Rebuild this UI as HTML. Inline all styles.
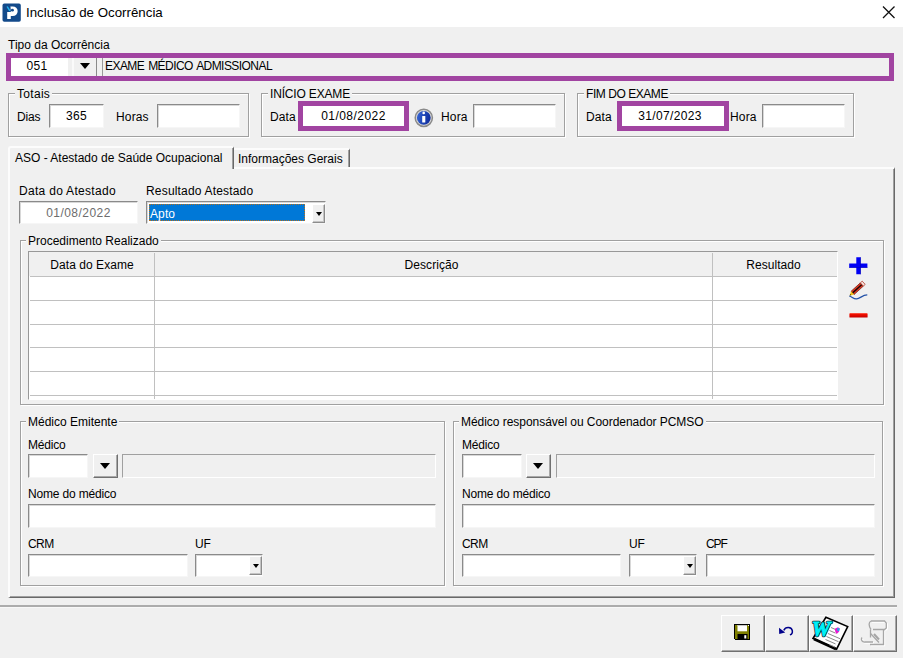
<!DOCTYPE html>
<html lang="pt-BR">
<head>
<meta charset="utf-8">
<title>Inclusão de Ocorrência</title>
<style>
*{box-sizing:border-box;margin:0;padding:0}
html,body{width:903px;height:658px;overflow:hidden;background:#f0f0f0}
body{position:relative;font-family:"Liberation Sans",sans-serif;font-size:12px;letter-spacing:0;color:#000}
.abs{position:absolute}
.t{position:absolute;white-space:nowrap;line-height:14px;height:14px}
.titlebar{position:absolute;left:0;top:0;width:903px;height:27px;background:#fff}
.title{position:absolute;left:26px;top:4px;font-size:13.3px;letter-spacing:0;line-height:18px;white-space:nowrap;color:#000}
.purple{position:absolute;border:5px solid #a144a1}
.inp{position:absolute;background:#fff;border:1px solid #e3e3e3;border-top-color:#8a8a8a;border-left-color:#8a8a8a;border-right-color:#f6f6f6;border-bottom-color:#f6f6f6;box-shadow:inset 1px 1px 0 #d8d8d8}
.inp.gray{background:#f0f0f0;box-shadow:none;border-top-color:#a0a0a0;border-left-color:#a0a0a0;border-right-color:#fff;border-bottom-color:#fff}
.val{position:absolute;left:0;right:0;top:50%;margin-top:-7px;height:14px;line-height:14px;text-align:center;white-space:nowrap}
.btn{position:absolute;background:#f0f0f0;border:1px solid #fff;border-right-color:#707070;border-bottom-color:#707070;box-shadow:inset -1px -1px 0 #a8a8a8}
.sbtn{border-right-color:#8c8c8c !important;border-bottom-color:#8c8c8c !important;box-shadow:inset -1px -1px 0 #c4c4c4 !important}
.fs{position:absolute;border:1px solid #a0a0a0;box-shadow:1px 1px 0 #fff, inset 1px 1px 0 #fff}
.lg{position:absolute;top:-7px;left:6px;background:#f0f0f0;padding:0 2px;line-height:14px;height:14px;white-space:nowrap}
.arrow{position:absolute;width:0;height:0;border-left:5.5px solid transparent;border-right:5.5px solid transparent;border-top:6px solid #000}
.sarrow{position:absolute;width:0;height:0;border-left:3.5px solid transparent;border-right:3.5px solid transparent;border-top:4px solid #000}
.grid{position:absolute;background:#fff}
.gl{position:absolute;background:#c0c0c0}
</style>
</head>
<body>
<!-- title bar -->
<div class="titlebar">
  <svg class="abs" style="left:2px;top:3px" width="20" height="20" viewBox="0 0 20 20">
    <rect x="0.500" y="0.600" width="18.300" height="18.100" rx="1.800" fill="#134a8a"/>
    <path d="M8.300 3.400h2.500a4.850 4.850 0 0 1 0 9.700H8.800v3H5.200V8.900h3.100z" fill="#fff"/>
    <path d="M8.300 3.400L5.200 3.400 5.200 8.900 8.800 8.900z" fill="#134a8a"/>
    <ellipse cx="10.400" cy="7.200" rx="1.500" ry="1.400" fill="#134a8a"/>
    <path d="M4.500 3.700l1.300-.5 2.700 4.200-1.200.8z" fill="#22b4f2"/>
  </svg>
  <div class="title">Inclusão de Ocorrência</div>
  <svg class="abs" style="left:881px;top:4.300px" width="16" height="16" viewBox="0 0 16 16"><path d="M2 2.5L13.5 14M13.5 2.5L2 14" stroke="#111" stroke-width="1.3" fill="none"/></svg>
</div>

<!-- Tipo da Ocorrência -->
<div class="t" style="letter-spacing:0px;left:8px;top:38px">Tipo da Ocorrência</div>
<div class="purple" style="left:6px;top:53px;width:888px;height:28px"></div>
<div class="abs" style="left:11px;top:58px;width:57px;height:18px;background:#fff"><div class="val" style="letter-spacing:0.4px;left:0;width:52px;right:auto;margin-top:-8px">051</div></div>
<div class="abs" style="left:72px;top:58px;width:2px;height:18px;background:#fafafa"></div>
<div class="abs" style="left:96px;top:58px;width:1px;height:18px;background:#8a8a8a"></div>
<div class="abs" style="left:80px;top:63px;width:0;height:0;border-left:5.5px solid transparent;border-right:5.5px solid transparent;border-top:6px solid #000"></div>
<div class="abs" style="left:102px;top:58px;width:787px;height:18px;background:#f0f0f0;border-left:1px solid #9a9a9a"><div class="t" style="letter-spacing:-0.56px;word-spacing:1.2px;left:2px;top:1px;">EXAME MÉDICO ADMISSIONAL</div></div>

<!-- Totais -->
<div class="fs" style="left:8px;top:93px;width:241px;height:44px"><span class="lg" style="letter-spacing:0.3px;">Totais</span></div>
<div class="t" style="letter-spacing:-0.19px;left:17px;top:110px">Dias</div>
<div class="inp" style="left:49px;top:104px;width:55px;height:24px"><div class="val" style="letter-spacing:0.4px;">365</div></div>
<div class="t" style="letter-spacing:0.15px;left:116px;top:110px">Horas</div>
<div class="inp" style="left:157px;top:104px;width:83px;height:24px"></div>

<!-- INICIO EXAME -->
<div class="fs" style="left:261px;top:93px;width:304px;height:44px"><span class="lg" style="letter-spacing:-0.17px;">INÍCIO EXAME</span></div>
<div class="t" style="letter-spacing:0.1px;left:270px;top:110px">Data</div>
<div class="purple" style="left:298px;top:101px;width:111px;height:30px"></div>
<div class="abs" style="left:303px;top:106px;width:101px;height:20px;background:#fff"><div class="val" style="letter-spacing:0.45px;">01/08/2022</div></div>
<svg class="abs" style="left:413px;top:107px" width="22" height="22" viewBox="0 0 22 22">
  <defs><linearGradient id="ig" x1="0" y1="0" x2="1" y2="0.3"><stop offset="0" stop-color="#3a6ad8"/><stop offset="0.55" stop-color="#2048b8"/><stop offset="1" stop-color="#1230a0"/></linearGradient></defs>
  <circle cx="10.800" cy="10.800" r="8.600" fill="#d8d8d8" stroke="#8a8a8a" stroke-width="1.500"/>
  <circle cx="10.800" cy="10.800" r="6.900" fill="url(#ig)"/>
  <circle cx="10.700" cy="5.900" r="1.300" fill="#fff"/>
  <rect x="9.200" y="8.900" width="3.100" height="6.600" rx=".5" fill="#fff"/>
</svg>
<div class="t" style="letter-spacing:0.15px;left:441px;top:110px">Hora</div>
<div class="inp" style="left:473px;top:104px;width:83px;height:24px"></div>

<!-- FIM DO EXAME -->
<div class="fs" style="left:577px;top:93px;width:277px;height:44px"><span class="lg" style="letter-spacing:-0.45px;">FIM DO EXAME</span></div>
<div class="t" style="letter-spacing:0.1px;left:586px;top:110px">Data</div>
<div class="purple" style="left:617px;top:101px;width:112px;height:30px"></div>
<div class="abs" style="left:622px;top:106px;width:102px;height:20px;background:#fff"><div class="val" style="letter-spacing:0.35px;left:-6px">31/07/2023</div></div>
<div class="t" style="letter-spacing:0.15px;left:730px;top:110px">Hora</div>
<div class="inp" style="left:762px;top:104px;width:83px;height:24px"></div>

<!-- Tabs -->
<div class="abs" style="left:8px;top:167px;width:887px;height:431px;border-left:2px solid #fcfcfc;border-top:2px solid #fcfcfc;border-right:1px solid #696969;border-bottom:1px solid #696969;box-shadow:inset -1px -1px 0 #a0a0a0"></div>
<div class="abs" style="left:8px;top:146px;width:226px;height:23px;background:#f0f0f0;border-left:2px solid #fcfcfc;border-top:2px solid #fcfcfc;border-right:1px solid #696969;box-shadow:inset -1px 0 0 #a0a0a0;border-radius:3px 2px 0 0"></div>
<div class="t" style="letter-spacing:0px;left:15px;top:151px">ASO - Atestado de Saúde Ocupacional</div>
<div class="abs" style="left:234px;top:148px;width:116px;height:19px;border-top:2px solid #fcfcfc;border-right:1px solid #696969;box-shadow:inset -1px 0 0 #a0a0a0;border-radius:0 2px 0 0"></div>
<div class="t" style="letter-spacing:0px;left:238px;top:152px">Informações Gerais</div>

<!-- inside tab -->
<div class="t" style="letter-spacing:0.3px;left:19px;top:184px">Data do Atestado</div>
<div class="inp" style="left:19px;top:201px;width:119px;height:23px"><div class="val" style="letter-spacing:0.45px;color:#6d6d6d">01/08/2022</div></div>
<div class="t" style="letter-spacing:0.18px;left:146px;top:184px">Resultado Atestado</div>
<div class="inp" style="left:146px;top:201px;width:180px;height:23px">
  <div class="abs" style="left:2px;top:2px;width:156px;height:17px;background:#0078d7;outline:1px dotted #b8701c;outline-offset:-1px"><div class="t" style="letter-spacing:0.1px;left:1px;top:3px;color:#fff">Apto</div></div>
  <div class="btn sbtn" style="left:165px;top:2px;width:13px;height:19px"><div class="sarrow" style="left:2.500px;top:7px"></div></div>
</div>

<!-- Procedimento Realizado -->
<div class="fs" style="left:20px;top:240px;width:864px;height:165px"><span class="lg" style="left:5px;letter-spacing:0px;">Procedimento Realizado</span></div>
<div class="grid" style="left:28px;top:251px;width:810px;height:149px;overflow:hidden;border-top:1px solid #989898;border-left:1px solid #989898;border-right:1px solid #fff;border-bottom:1px solid #fff">
  <div class="abs" style="left:0;top:0;width:809px;height:24px;background:#f0f0f0"></div>
  <div class="gl" style="left:1px;top:24px;width:808px;height:1px"></div>
  <div class="gl" style="left:1px;top:48px;width:808px;height:1px"></div>
  <div class="gl" style="left:1px;top:72px;width:808px;height:1px"></div>
  <div class="gl" style="left:1px;top:95px;width:808px;height:1px"></div>
  <div class="gl" style="left:1px;top:119px;width:808px;height:1px"></div>
  <div class="gl" style="left:1px;top:143px;width:808px;height:1px"></div>
  <div class="gl" style="left:125px;top:1px;width:1px;height:148px"></div>
  <div class="gl" style="left:683px;top:1px;width:1px;height:148px"></div>
  <div class="t" style="letter-spacing:0.05px;left:1px;width:124px;text-align:center;top:6px">Data do Exame</div>
  <div class="t" style="letter-spacing:0.05px;left:124px;width:557px;text-align:center;top:6px">Descrição</div>
  <div class="t" style="letter-spacing:0.05px;left:682px;width:125px;text-align:center;top:6px">Resultado</div>
</div>
<!-- plus / pencil / minus -->
<svg class="abs" style="left:848px;top:256px" width="21" height="20" viewBox="0 0 21 20"><path d="M8.300 1.200h4.400v6.200h6.700v4.400h-6.700v6.500H8.300v-6.500H1.200V7.400h7.100z" fill="#0000f4"/><path d="M12.200 1.200h.5v17.100h-.5zM1.200 11.300h18.200v.5H1.200z" fill="#0000b0"/></svg>
<svg class="abs" style="left:848px;top:280px" width="21" height="21" viewBox="0 0 21 21">
  <path d="M1.300 16.100c2.600 .2 4 3.100 7.300 2.800 3.600-.4 6-4 10.700-3.900" stroke="#2452a8" stroke-width="1.250" fill="none"/>
  <path d="M3.120 11.280L12.360 2.850 15.330 6.100 6.090 14.530z" fill="#e43a22" stroke="#6a1208" stroke-width=".7"/>
  <path d="M4.600 12.900L13.850 4.480" stroke="#1c0606" stroke-width="1.500"/>
  <path d="M12.360 2.850L14.210 1.170 17.170 4.420 15.330 6.100z" fill="#f8e4e0" stroke="#b03828" stroke-width=".8"/>
  <path d="M3.120 11.280L1.650 15.600 6.090 14.530z" fill="#f2c410"/>
  <path d="M1.650 15.600l.6-1.700 1.200 1.300z" fill="#403000"/>
</svg>
<svg class="abs" style="left:849px;top:313px" width="19" height="5" viewBox="0 0 19 5"><defs><linearGradient id="mg" x1="0" y1="0" x2="0" y2="1"><stop offset="0" stop-color="#ff1400"/><stop offset="1" stop-color="#c40000"/></linearGradient></defs><rect x=".4" y=".3" width="18.200" height="4.200" rx=".6" fill="url(#mg)"/></svg>

<!-- Médico Emitente -->
<div class="fs" style="left:20px;top:421px;width:425px;height:165px"><span class="lg" style="left:5px;letter-spacing:0px;">Médico Emitente</span></div>
<div class="t" style="letter-spacing:-0.2px;left:28px;top:438px">Médico</div>
<div class="inp" style="left:28px;top:454px;width:60px;height:24px"></div>
<div class="btn" style="left:93px;top:454px;width:25px;height:24px"><div class="arrow" style="left:6px;top:8px"></div></div>
<div class="inp gray" style="left:122px;top:454px;width:314px;height:24px"></div>
<div class="t" style="letter-spacing:-0.17px;left:28px;top:487px">Nome do médico</div>
<div class="inp" style="left:28px;top:504px;width:408px;height:24px"></div>
<div class="t" style="letter-spacing:-0.6px;left:28px;top:537px">CRM</div>
<div class="inp" style="left:28px;top:554px;width:160px;height:23px"></div>
<div class="t" style="letter-spacing:-0.2px;left:195px;top:537px">UF</div>
<div class="inp" style="left:195px;top:554px;width:68px;height:23px">
  <div class="btn sbtn" style="left:53px;top:1px;width:13px;height:19px"><div class="sarrow" style="left:2.500px;top:7px"></div></div>
</div>

<!-- Médico responsável -->
<div class="fs" style="left:453px;top:421px;width:430px;height:165px"><span class="lg" style="left:5px;letter-spacing:-0.04px;">Médico responsável ou Coordenador PCMSO</span></div>
<div class="t" style="letter-spacing:-0.2px;left:462px;top:438px">Médico</div>
<div class="inp" style="left:462px;top:454px;width:60px;height:24px"></div>
<div class="btn" style="left:526px;top:454px;width:25px;height:24px"><div class="arrow" style="left:6px;top:8px"></div></div>
<div class="inp gray" style="left:556px;top:454px;width:319px;height:24px"></div>
<div class="t" style="letter-spacing:-0.17px;left:462px;top:487px">Nome do médico</div>
<div class="inp" style="left:462px;top:504px;width:413px;height:24px"></div>
<div class="t" style="letter-spacing:-0.6px;left:462px;top:537px">CRM</div>
<div class="inp" style="left:462px;top:554px;width:159px;height:23px"></div>
<div class="t" style="letter-spacing:-0.2px;left:629px;top:537px">UF</div>
<div class="inp" style="left:629px;top:554px;width:68px;height:23px">
  <div class="btn sbtn" style="left:53px;top:1px;width:13px;height:19px"><div class="sarrow" style="left:2.500px;top:7px"></div></div>
</div>
<div class="t" style="letter-spacing:-1.1px;left:706px;top:537px">CPF</div>
<div class="inp" style="left:706px;top:554px;width:169px;height:23px"></div>

<!-- bottom separator -->
<div class="abs" style="left:0;top:605px;width:897px;height:3px;border-top:2px solid #acacac;border-bottom:1px solid #f8f8f8"></div>

<!-- buttons -->
<div class="btn" style="left:721px;top:615px;width:44px;height:37px"></div>
<svg class="abs" style="left:734px;top:624px" width="16" height="16" viewBox="0 0 16 16">
  <rect x=".5" y=".5" width="15" height="15" fill="#808000" stroke="#000" stroke-width="1"/>
  <rect x="3.500" y="1" width="9.500" height="6.300" fill="#fff"/>
  <rect x="3.500" y="1" width="9.500" height="1" fill="#c8c8c8"/>
  <rect x="3.500" y="10" width="10" height="5.500" fill="#000"/>
  <rect x="10.300" y="11.200" width="2" height="3.300" fill="#fff"/>
  <rect x="14" y="1" width="1" height="1" fill="#fff"/>
  <rect x="0" y="15" width="1" height="1" fill="#f0f0f0"/>
</svg>
<div class="btn" style="left:765px;top:615px;width:44px;height:37px"></div>
<svg class="abs" style="left:778px;top:625px" width="17" height="12" viewBox="0 0 17 12">
  <path d="M5.800 5.400C7.500 1.200 13.600 1.700 14.300 5.600c.4 2.300-.8 3.800-2.400 4.300" stroke="#00008b" stroke-width="1.500" fill="none"/>
  <path d="M1 2.800l.2 6.200 6-1.600z" fill="#00008b"/>
</svg>
<div class="btn" style="left:809px;top:615px;width:44px;height:37px"></div>
<svg class="abs" style="left:809px;top:615px" width="44" height="37" viewBox="0 0 44 37">
  <path d="M16.900 2.300L38.700 11.600 27.600 34.200 4 23.500z" fill="#fff" stroke="#000" stroke-width="1.600" stroke-linejoin="miter"/>
  <path d="M5 24l22 10" stroke="#000" stroke-width="3"/>
  <g stroke="#8a8a8a" stroke-width="1">
    <path d="M22 12.500l5 2.200M20.500 15.500l6 2.600M19 18.500l12 5.200M17.500 21.500l12 5.200M16.500 24.500l10 4.400M20 29.500l6 2.600"/>
  </g>
  <path d="M25.800 13.800l3.200-1.600 1.800 1.200-.8 3.400-2.400 2.200-1.200-2z" fill="#e818d0"/>
  <path d="M28.200 13l2.600.6-.8 2.600-1.800-.6z" fill="#10b8e8"/>
  <text x="2.800" y="20.800" font-family="'Liberation Serif',serif" font-weight="bold" font-style="italic" font-size="21" fill="#04262a" stroke="#04262a" stroke-width="2.600" stroke-linejoin="round" style="letter-spacing:0">W</text>
  <text x="2.800" y="20.800" font-family="'Liberation Serif',serif" font-weight="bold" font-style="italic" font-size="21" fill="#00f0f8" stroke="#00f0f8" stroke-width=".9" style="letter-spacing:0">W</text>
</svg>
<div class="btn" style="left:853px;top:615px;width:44px;height:37px"></div>
<svg class="abs" style="left:853px;top:615px" width="44" height="37" viewBox="0 0 44 37" fill="none" stroke="#a6a6a6" stroke-width="1.300">
  <g stroke="#fff" transform="translate(1 1)">
    <path d="M18 6h13.500l1.800 2v5l-1.800 1.500"/><path d="M30.500 15v14.500H17"/><path d="M9 22.500c-1.500 2 0 5 3 4.500h8"/>
  </g>
  <path d="M18 6h13.500l1.800 2v5l-1.800 1.500H20"/>
  <path d="M18 6c-2.500 1-2.500 5 0 8.500"/>
  <path d="M30.500 15v14.500H17"/>
  <path d="M17.500 14.500v8"/>
  <path d="M9 22.500c-1.500 2 0 5 3 4.500h8"/>
  <path d="M17.500 18.500l8.500 9"/>
  <path d="M21 19l5 5.500" stroke-width="2"/>
</svg>
</body>
</html>
